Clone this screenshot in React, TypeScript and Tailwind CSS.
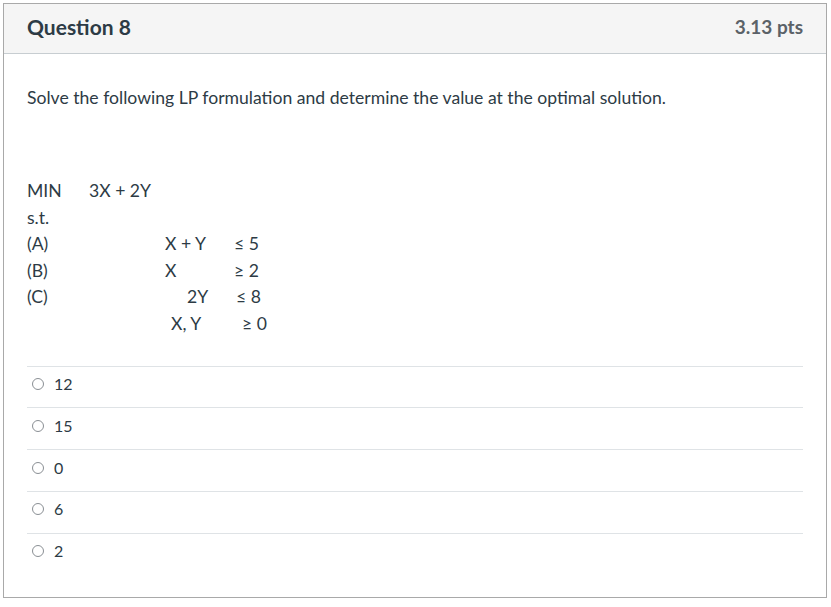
export default function App() {
  const answers = ['12', '15', '0', '6', '2']

  return (
    <div className="w-[831px] h-[607px] bg-white pt-[3px] pl-[3px]" style={{ fontFamily: 'Lato, "Open Sans", sans-serif' }}>
      <div className="w-[824px] h-[595px] border border-[#a9a9a9] text-[#2d3b45]">
        {/* header */}
        <div className="h-[50px] bg-[#f5f5f5] border-b border-[#c7cdd1] flex items-center justify-between pl-[23px] pr-[23px] pb-[3px]">
          <h2 className="text-[21px] font-bold text-[#2d3b45]">Question 8</h2>
          <span className="text-[19px] font-bold text-[#5b6268]">3.13 pts</span>
        </div>

        {/* body */}
        <div className="pl-[23px] pr-[23px]">
          <p className="text-[17.6px] mt-[32px] leading-[24px]">
            Solve the following LP formulation and determine the value at the optimal solution.
          </p>

          <div className="mt-[68px] text-[17.6px] leading-[26.6px]">
            <div className="flex">
              <span className="w-[62px]">MIN</span>
              <span>3X + 2Y</span>
            </div>
            <div>s.t.</div>
            <div className="flex">
              <span className="w-[138px]">(A)</span>
              <span className="w-[69px]">X + Y</span>
              <span>≤ 5</span>
            </div>
            <div className="flex">
              <span className="w-[138px]">(B)</span>
              <span className="w-[69px]">X</span>
              <span>≥ 2</span>
            </div>
            <div className="flex">
              <span className="w-[138px]">(C)</span>
              <span className="w-[71px] pl-[22px]">2Y</span>
              <span>≤ 8</span>
            </div>
            <div className="flex">
              <span className="w-[144px]"></span>
              <span className="w-[71px]">X, Y</span>
              <span>≥ 0</span>
            </div>
          </div>

          <div className="mt-[28px]">
            {answers.map((a) => (
              <div key={a} className="h-[41.8px] border-t border-[#dfe3e6] flex items-center pl-[5px] pb-[6px] text-[16px]">
                <span className="w-[12px] h-[12px] rounded-full border border-[#8a8f94] mr-[10px]"></span>
                <span>{a}</span>
              </div>
            ))}
          </div>
        </div>
      </div>
    </div>
  )
}
